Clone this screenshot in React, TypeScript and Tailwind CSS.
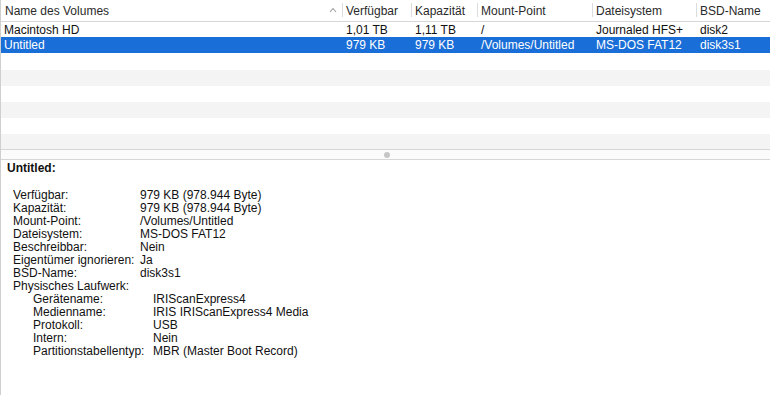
import React from 'react';

const cols = [
  { label: 'Name des Volumes', w: 'w-[341px]' },
  { label: 'Verfügbar', w: 'w-[69px]' },
  { label: 'Kapazität', w: 'w-[66px]' },
  { label: 'Mount-Point', w: 'w-[115px]' },
  { label: 'Dateisystem', w: 'w-[104px]' },
  { label: 'BSD-Name', w: 'flex-1' },
];

const volumes = [
  ['Macintosh HD', '1,01 TB', '1,11 TB', '/', 'Journaled HFS+', 'disk2'],
  ['Untitled', '979 KB', '979 KB', '/Volumes/Untitled', 'MS-DOS FAT12', 'disk3s1'],
];

const details: [string, string, boolean?][] = [
  ['Verfügbar:', '979 KB (978.944 Byte)'],
  ['Kapazität:', '979 KB (978.944 Byte)'],
  ['Mount-Point:', '/Volumes/Untitled'],
  ['Dateisystem:', 'MS-DOS FAT12'],
  ['Beschreibbar:', 'Nein'],
  ['Eigentümer ignorieren:', 'Ja'],
  ['BSD-Name:', 'disk3s1'],
  ['Physisches Laufwerk:', ''],
  ['Gerätename:', 'IRIScanExpress4', true],
  ['Medienname:', 'IRIS IRIScanExpress4 Media', true],
  ['Protokoll:', 'USB', true],
  ['Intern:', 'Nein', true],
  ['Partitionstabellentyp:', 'MBR (Master Boot Record)', true],
];

export default function App() {
  return (
    <div
      className="w-[770px] h-[395px] bg-white overflow-hidden flex flex-col text-[#222] border-l border-[#cfcfcf]"
      style={{ fontFamily: '"Liberation Sans", Arial, sans-serif' }}
    >
      {/* header */}
      <div className="h-[22px] flex border-b border-[#d6d6d6] text-[12px] text-[#2a2a2a]">
        {cols.map((c, i) => (
          <div key={c.label} className={`${c.w} flex items-center relative pl-[4px]`}>
            {i > 0 && <span className="absolute left-0 top-[3px] bottom-[4px] w-px bg-[#dcdcdc]" />}
            <span>{c.label}</span>
            {i === 0 && (
              <svg className="absolute right-[5px] top-[7px]" width="8" height="6" viewBox="0 0 8 6">
                <path d="M1 5 L4 1.5 L7 5" fill="none" stroke="#9a9a9a" strokeWidth="1.1" />
              </svg>
            )}
          </div>
        ))}
      </div>

      {/* rows */}
      <div className="flex flex-col text-[12px]">
        {volumes.map((r, ri) => (
          <div
            key={r[0]}
            className={`flex items-center ${ri === 1 ? 'h-[16px] bg-[#1a6ed7] text-white' : 'h-[15px] text-[#111]'}`}
          >
            {r.map((cell, ci) => (
              <div key={ci} className={`${cols[ci].w} ${ci === 0 ? 'pl-[3px]' : 'pl-[4px]'} whitespace-nowrap`}>
                {cell}
              </div>
            ))}
          </div>
        ))}
        <div className="h-[17px]" />
        <div className="h-[16px] bg-[#f4f4f4]" />
        <div className="h-[16px]" />
        <div className="h-[16px] bg-[#f4f4f4]" />
        <div className="h-[16px]" />
        <div className="h-[15px] bg-[#f4f4f4]" />
      </div>

      {/* splitter */}
      <div className="h-[11px] border-y border-[#d6d6d6] bg-[#fbfbfb] flex items-center justify-center">
        <span className="w-[6px] h-[6px] rounded-full bg-[#c6c6c6] ml-[2px]" />
      </div>

      {/* details */}
      <div className="flex-1 pl-[6px] pt-[1px]">
        <div className="text-[12px] font-bold text-[#111] leading-[15px]">Untitled:</div>
        <div className="mt-[13px] pl-[6px] text-[12px] leading-[13px] text-[#111]">
          {details.map(([k, v, nested]) => (
            <div key={k} className="flex whitespace-nowrap">
              <div className={nested ? 'w-[140px] pl-[20px]' : 'w-[127px]'}>{k}</div>
              <div>{v}</div>
            </div>
          ))}
        </div>
      </div>
    </div>
  );
}
